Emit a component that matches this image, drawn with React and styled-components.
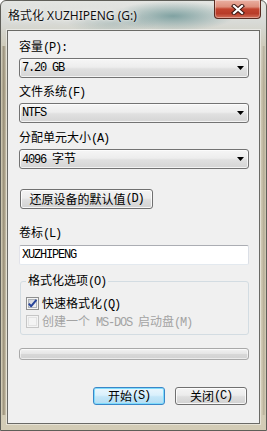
import React from 'react';
import styled, { createGlobalStyle } from 'styled-components';

const GlobalStyle = createGlobalStyle`
  html, body { margin: 0; padding: 0; width: 267px; height: 431px; overflow: hidden; background: #ffffff; }
  body { font-family: "Noto Sans CJK SC", "Noto Sans", sans-serif; }
  * { box-sizing: border-box; }
`;

const Window = styled.div`
  width: 267px;
  height: 431px;
  display: flex;
  flex-direction: column;
  padding: 0 6px 6px;
  border: 1px solid #5e5e58;
  border-radius: 6px 6px 0 0;
  background:
    radial-gradient(ellipse 62px 15px at 172px 15px, rgba(72, 126, 128, 0.62), rgba(72, 126, 128, 0) 100%),
    radial-gradient(ellipse 45px 12px at 112px 22px, rgba(120, 155, 155, 0.35), rgba(120, 155, 155, 0) 100%),
    linear-gradient(to right, rgba(0,0,0,0) 0, rgba(0,0,0,0) 1px, rgba(120,108,84,0.55) 2px, rgba(120,108,84,0.55) 3px, rgba(0,0,0,0) 5px) 0 45px / 7px calc(100% - 60px) no-repeat,
    linear-gradient(to left, rgba(0,0,0,0) 0, rgba(0,0,0,0) 1px, rgba(140,128,104,0.4) 2px, rgba(0,0,0,0) 4px) 100% 45px / 7px calc(100% - 60px) no-repeat,
    linear-gradient(to bottom, #e3e5e2 0%, #d8dad6 5%, #cfccbd 10%, #c9c2ac 20%, #cdc6b0 70%, #d3ccb6 100%);
`;

const TitleBar = styled.div`
  height: 29px;
  margin: 0 -6px;
  padding: 0 5px 0 7px;
  display: flex;
  align-items: flex-start;
  justify-content: space-between;
  flex: none;
`;

const Title = styled.div`
  padding-top: 7px;
  font-family: "Noto Sans", "Noto Sans CJK SC", sans-serif;
  font-size: 12px;
  line-height: 16px;
  color: #101010;
  text-shadow: 0 0 6px rgba(255, 255, 255, 0.95), 0 0 2px rgba(255, 255, 255, 0.9);
  white-space: nowrap;
`;

const CloseButton = styled.div`
  width: 47px;
  height: 19px;
  margin-top: -1px;
  border: 1px solid #5a2a20;
  border-top: none;
  border-radius: 0 0 4px 4px;
  background: linear-gradient(to bottom, #eab0a2 0%, #de8f7c 38%, #c2442f 50%, #b83c29 75%, #d2705a 100%);
  box-shadow: inset 0 0 0 1px rgba(255, 255, 255, 0.35);
  display: flex;
  align-items: center;
  justify-content: center;
`;

const Client = styled.div`
  flex: 1;
  background: #f0f0f0;
  border: 1px solid #6a6a66;
  box-shadow: 0 0 0 1px rgba(255, 255, 255, 0.45);
  padding: 7px 10px 0 11px;
  display: flex;
  flex-direction: column;
  align-items: flex-start;
`;

const Label = styled.div`
  font-size: 12px;
  line-height: 16px;
  color: #000;
  white-space: nowrap;
  margin-top: ${(p) => p.$mt || 0}px;
  margin-bottom: ${(p) => (p.$mb === undefined ? 2 : p.$mb)}px;
`;

const Mono = styled.span`
  font-family: "Liberation Mono", "DejaVu Sans Mono", monospace;
  font-size: 12px;
  letter-spacing: -1.2px;
`;

const Combo = styled.div`
  width: 230px;
  height: 20px;
  flex: none;
  margin-bottom: ${(p) => p.$mb}px;
  border: 1px solid #737373;
  border-radius: 3px;
  background: linear-gradient(to bottom, #f6f6f6 0%, #ededed 45%, #e0e0e0 55%, #d5d5d5 100%);
  box-shadow: inset 0 0 0 1px rgba(255, 255, 255, 0.7);
  display: flex;
  align-items: center;
  justify-content: space-between;
  padding: 0 4px 0 2px;
  font-size: 12px;
  line-height: 16px;
  color: #000;
  white-space: nowrap;
`;

const Button = styled.button`
  width: ${(p) => p.$w}px;
  height: ${(p) => p.$h}px;
  margin: ${(p) => p.$m || '0'};
  padding: 0;
  flex: none;
  font-family: "Noto Sans CJK SC", "Noto Sans", sans-serif;
  font-size: 12px;
  line-height: 16px;
  color: #000;
  white-space: nowrap;
  border: 1px solid ${(p) => (p.$default ? '#3a86c8' : '#707070')};
  border-radius: 3px;
  background: ${(p) =>
    p.$default
      ? 'linear-gradient(to bottom, #eaf6fd 0%, #d9f0fc 45%, #c3e6f8 55%, #b4ddf3 100%)'
      : 'linear-gradient(to bottom, #f4f4f4 0%, #ececec 45%, #dedede 55%, #d2d2d2 100%)'};
  box-shadow: inset 0 0 0 1px ${(p) => (p.$default ? '#7fdcfc' : 'rgba(255,255,255,0.8)')};
  display: flex;
  align-items: center;
  justify-content: center;
`;

const TextInput = styled.input`
  width: 230px;
  height: 20px;
  flex: none;
  margin: 0;
  padding: 0 0 0 2px;
  background: #fff;
  border: 1px solid;
  border-color: #abadb3 #dbdfe6 #e3e9ef #e2e3ea;
  border-radius: 2px;
  font-family: "Liberation Mono", "DejaVu Sans Mono", monospace;
  font-size: 12px;
  letter-spacing: -1.2px;
  color: #000;
  outline: none;
`;

const Group = styled.fieldset`
  width: 229px;
  min-width: 0;
  margin: 8px 0 0 1px;
  padding: 5px 0 4px 5px;
  border: 1px solid #d3dce2;
  border-radius: 3px;
`;

const Legend = styled.legend`
  padding: 0 2px;
  font-size: 12px;
  line-height: 14px;
  color: #000;
  white-space: nowrap;
`;

const CheckRow = styled.div`
  display: flex;
  align-items: flex-start;
  gap: 3px;
  height: 18px;
  font-size: 12px;
  line-height: 18px;
  color: ${(p) => (p.$disabled ? '#a3a3a3' : '#000')};
  white-space: nowrap;
`;

const CheckBox = styled.svg`
  width: 13px;
  height: 13px;
  margin-top: 3px;
  flex: none;
  display: block;
`;

const Progress = styled.div`
  width: 230px;
  height: 12px;
  flex: none;
  margin-top: 13px;
  border: 1px solid #a9a9a9;
  border-radius: 3px;
  background: linear-gradient(to bottom, #f2f2f2 0%, #e6e6e6 45%, #d7d7d7 55%, #d2d2d2 100%);
  box-shadow: inset 0 0 0 1px rgba(255, 255, 255, 0.55);
`;

const Footer = styled.div`
  align-self: stretch;
  display: flex;
  justify-content: flex-end;
  gap: 10px;
  margin-top: 27px;
  padding-right: 2px;
`;

const Arrow = () => (
  <svg width="7" height="4" viewBox="0 0 7 4" style={{ display: 'block' }}>
    <path d="M0 0 H7 L3.5 4 Z" fill="#000" />
  </svg>
);

const Check = ({ checked, disabled }) => (
  <CheckBox viewBox="0 0 13 13">
    <defs>
      <linearGradient id={disabled ? 'cbd' : 'cbe'} x1="0" y1="0" x2="1" y2="1">
        <stop offset="0" stopColor={disabled ? '#f4f4f4' : '#cbcfd5'} />
        <stop offset="1" stopColor={disabled ? '#f4f4f4' : '#f6f6f6'} />
      </linearGradient>
    </defs>
    <rect x="0.5" y="0.5" width="12" height="12" fill="#f4f4f4" stroke={disabled ? '#c6c6c6' : '#8e8f8f'} />
    <rect x="2.5" y="2.5" width="8" height="8" fill={`url(#${disabled ? 'cbd' : 'cbe'})`} stroke={disabled ? '#e3e3e3' : '#aeb3b9'} />
    {checked && (
      <path d="M2.8 6.6 L5.2 9.2 L10.4 2.8" fill="none" stroke="#27449a" strokeWidth="2" strokeLinejoin="round" />
    )}
  </CheckBox>
);

const CloseX = () => (
  <svg width="14" height="11" viewBox="0 0 14 11" style={{ display: 'block' }}>
    <path d="M3 2 L11 9 M11 2 L3 9" stroke="#3b1712" strokeWidth="4.2" strokeLinecap="square" />
    <path d="M3 2 L11 9 M11 2 L3 9" stroke="#ffffff" strokeWidth="2.2" strokeLinecap="square" />
  </svg>
);

export default function App() {
  return (
    <>
      <GlobalStyle />
      <Window>
        <TitleBar>
          <Title>格式化 XUZHIPENG (G:)</Title>
          <CloseButton>
            <CloseX />
          </CloseButton>
        </TitleBar>
        <Client>
          <Label>容量<Mono>(P):</Mono></Label>
          <Combo $mb={5}>
            <Mono>7.20 GB</Mono>
            <Arrow />
          </Combo>
          <Label>文件系统<Mono>(F)</Mono></Label>
          <Combo $mb={6}>
            <Mono>NTFS</Mono>
            <Arrow />
          </Combo>
          <Label>分配单元大小<Mono>(A)</Mono></Label>
          <Combo $mb={20}>
            <span><Mono>4096 </Mono>字节</span>
            <Arrow />
          </Combo>
          <Button $w={133} $h={20} $m="0 0 0 1px">还原设备的默认值<Mono>(D)</Mono></Button>
          <Label $mt={15} $mb={3}>卷标<Mono>(L)</Mono></Label>
          <TextInput readOnly value="XUZHIPENG" />
          <Group>
            <Legend>格式化选项<Mono>(O)</Mono></Legend>
            <CheckRow>
              <Check checked />
              <span>快速格式化<Mono>(Q)</Mono></span>
            </CheckRow>
            <CheckRow $disabled>
              <Check disabled />
              <span>创建一个<Mono> MS-DOS </Mono>启动盘<Mono>(M)</Mono></span>
            </CheckRow>
          </Group>
          <Progress />
          <Footer>
            <Button $w={72} $h={18} $default>开始<Mono>(S)</Mono></Button>
            <Button $w={72} $h={18}>关闭<Mono>(C)</Mono></Button>
          </Footer>
        </Client>
      </Window>
    </>
  );
}
